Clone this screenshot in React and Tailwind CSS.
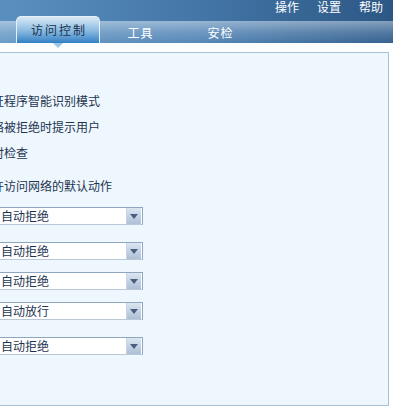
import React from "react";

const font = { fontFamily: '"Noto Sans CJK SC", "Noto Sans", sans-serif' };

function Select({ value, className = "" }) {
  return (
    <div className={`-ml-[2px] w-[145px] h-[18px] flex items-center justify-between border border-[#8ea6c0] border-b-[#b9c9d8] bg-white ${className}`}>
      <span className="pl-[2px] text-[12px] leading-none text-[#1d3450]">{value}</span>
      <div className="w-[15px] h-[16px] mr-px flex items-center justify-center bg-gradient-to-b from-[#dbe6f2] to-[#aebfd5] border-l border-[#c6d4e3]">
        <svg width="8" height="5" viewBox="0 0 8 5">
          <path d="M0 0 H8 L4 5 Z" fill="#4a5f80" />
        </svg>
      </div>
    </div>
  );
}

export default function App() {
  return (
    <div className="w-[393px] h-[414px] overflow-hidden bg-white" style={font}>
      {/* top bar */}
      <div className="h-[21px] flex justify-end items-start gap-[18px] pr-[10px] pt-[1px] bg-gradient-to-r from-[#5a8fc0] via-[#4477a8] to-[#2c5785]">
        <span className="text-white text-[12px] leading-[12px]">操作</span>
        <span className="text-white text-[12px] leading-[12px]">设置</span>
        <span className="text-white text-[12px] leading-[12px]">帮助</span>
      </div>
      {/* tab row */}
      <div className="relative h-[22px] flex items-end bg-gradient-to-r from-[#6b9cc8] via-[#5587b7] to-[#35618f]">
        <div className="absolute inset-0 bg-gradient-to-b from-white/40 via-white/15 to-transparent pointer-events-none" />
        <div className="w-4 shrink-0" />
        <div className="relative w-[84px] h-[27px] shrink-0 rounded-t-[5px] border border-b-0 border-[#e6f0f8] bg-gradient-to-b from-[#d8e9f6] via-[#8fbde2] to-[#2f7fc4] flex items-center justify-center">
          <span className="text-[12px] tracking-[2px] text-[#17324d] leading-none pl-[2px]">访问控制</span>
          <div className="absolute left-[36px] -bottom-[5px] w-0 h-0 border-l-[5px] border-r-[5px] border-t-[5px] border-l-transparent border-r-transparent border-t-[#9cc6e6]" />
        </div>
        <div className="relative w-[80px] h-[22px] shrink-0 flex items-center justify-center pt-[1px]">
          <span className="text-[12px] tracking-[1px] text-white leading-none pl-[1px]">工具</span>
        </div>
        <div className="relative w-[80px] h-[22px] shrink-0 flex items-center justify-center pt-[1px]">
          <span className="text-[12px] tracking-[1px] text-white leading-none pl-[1px]">安检</span>
        </div>
      </div>
      {/* white strip */}
      <div className="h-[9px] bg-[#fbfdff]" />
      {/* panel */}
      <div className="w-[389px] h-[354px] border-t border-r border-b border-[#a7c1d6] bg-[#eff7fe] overflow-hidden">
        <div className="pt-[35px] text-[12px] text-[#1d3450] whitespace-nowrap">
          <div className="h-[26px] flex items-center -ml-[8px]">证程序智能识别模式</div>
          <div className="h-[26px] flex items-center -ml-[8px]">络被拒绝时提示用户</div>
          <div className="h-[26px] flex items-center -ml-[8px]">时检查</div>
          <div className="h-[26px] mt-[7px] flex items-center -ml-[8px]">许访问网络的默认动作</div>
          <div className="mt-[8px] flex flex-col">
            <Select value="自动拒绝" />
            <Select value="自动拒绝" className="mt-[17px]" />
            <Select value="自动拒绝" className="mt-[12px]" />
            <Select value="自动放行" className="mt-[12px]" />
            <Select value="自动拒绝" className="mt-[17px]" />
          </div>
        </div>
      </div>
    </div>
  );
}
